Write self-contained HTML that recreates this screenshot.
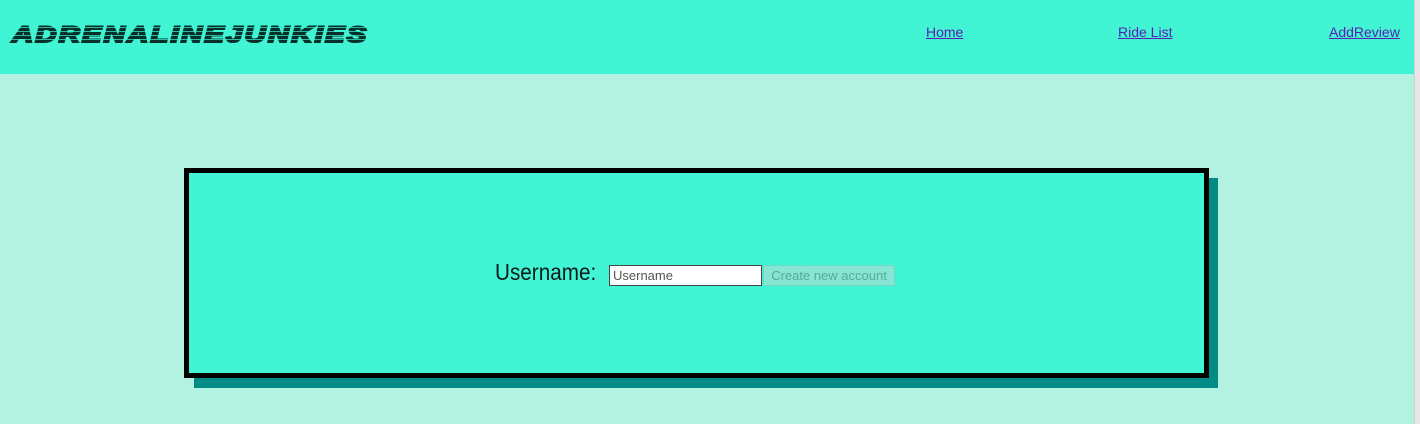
<!DOCTYPE html>
<html><head><style>
html,body{margin:0;padding:0;width:1420px;height:424px;overflow:hidden;background:#b3f1e1;font-family:"Liberation Sans",sans-serif}
.sb{position:absolute;left:1414px;top:0;width:6px;height:424px;background:#e8e8e8;border-left:1px solid #d0d0d0}
.hdr{position:absolute;left:0;top:0;width:1414px;height:74px;background:#40f4d4}
.logo{position:absolute;left:12px;top:22px;font:italic bold 22px "Liberation Sans",sans-serif;color:#06302a;letter-spacing:1.8px;transform:scaleX(1.32);transform-origin:left;text-transform:uppercase;-webkit-text-stroke:2px #06302a}
.stripes{position:absolute;left:0;top:24px;width:380px;height:22px;background:repeating-linear-gradient(transparent 0 3px,rgba(64,244,212,.7) 3px 4px)}
.nav a{position:absolute;top:24px;font-size:14px;color:#5a1fb0;text-decoration:underline}
.shadow{position:absolute;left:194px;top:178px;width:1024px;height:210px;background:#008b84}
.box{position:absolute;left:184px;top:168px;width:1015px;height:200px;border:5px solid #000;background:#40f4d4}
.lbl{position:absolute;left:495px;top:259px;font-size:23px;color:#0a1a18;transform:scaleX(.9);transform-origin:left}
.inp{position:absolute;left:609px;top:265px;border:1px solid #444;background:#fff;font-size:13px;color:#555;line-height:19px;padding-left:3px;box-sizing:border-box;width:153px;height:21px}
.btn{position:absolute;left:763px;top:265px;width:132px;height:21px;box-sizing:border-box;border:1px solid #6fd8c4;background:#86e6d3;color:#5aa897;font-size:13px;line-height:19px;text-align:center}
</style></head><body>
<div class="hdr"><div class="logo">AdrenalineJunkies</div><div class="stripes"></div>
<div class="nav"><a style="left:926px">Home</a><a style="left:1118px">Ride List</a><a style="left:1329px">AddReview</a></div></div>
<div class="sb"></div>
<div class="shadow"></div>
<div class="box"></div>
<div class="lbl">Username:</div>
<div class="inp">Username</div>
<div class="btn">Create new account</div>
</body></html>
